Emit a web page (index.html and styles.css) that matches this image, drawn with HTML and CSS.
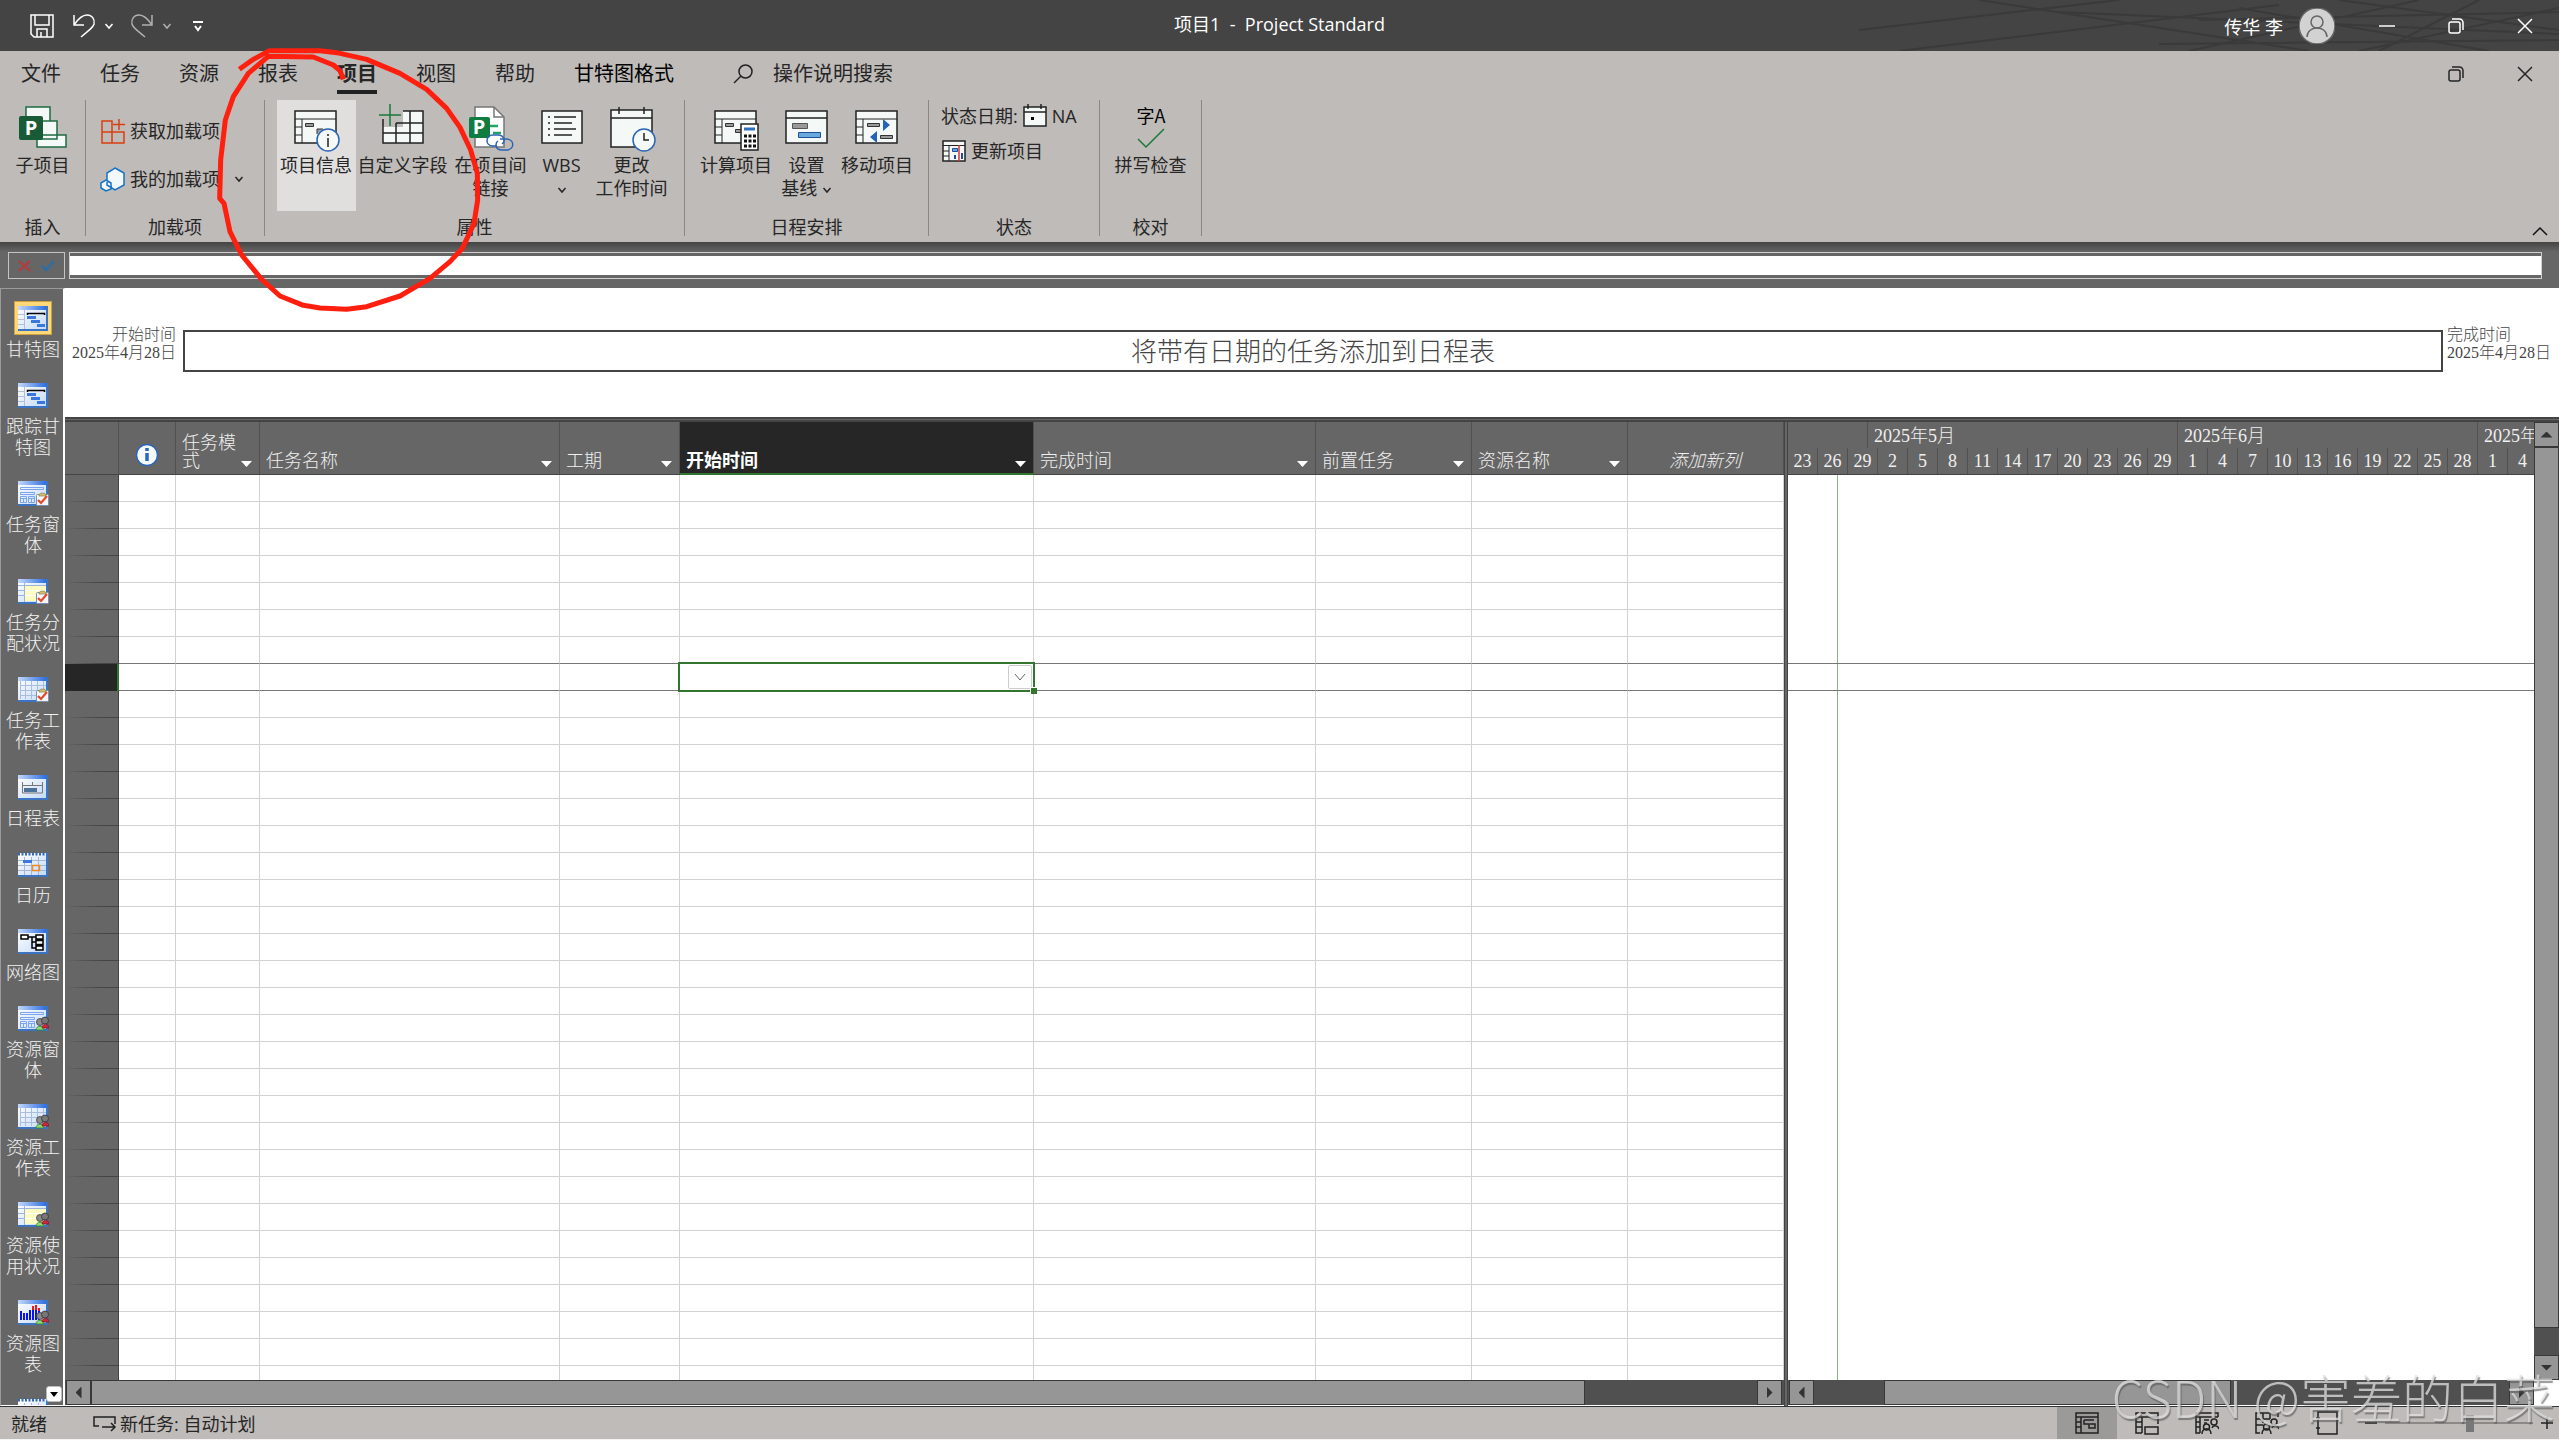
FILE: index.html
```html
<!DOCTYPE html>
<html lang="zh-CN">
<head>
  <meta charset="UTF-8">
  <meta name="viewport" content="width=device-width, initial-scale=1.0">
  <title>项目1 - Project Standard</title>
  <link rel="stylesheet" href="styles.css">
</head>
<body>
  <!-- Shared icon parts -->
  <svg class="defs" aria-hidden="true">
    <defs>
      <linearGradient id="winBar" x1="0" x2="1" y1="0" y2="0">
        <stop offset="0" stop-color="#c3d8fb"/><stop offset="1" stop-color="#2f6fe0"/>
      </linearGradient>
      <linearGradient id="winBody" x1="0" x2="1" y1="0" y2="1">
        <stop offset="0" stop-color="#ffffff"/><stop offset="1" stop-color="#c4daf8"/>
      </linearGradient>
      <symbol id="win" viewBox="0 0 32 26">
        <rect x="1" y="1" width="30" height="25" fill="#3c74c4"/>
        <rect x="1" y="1" width="28" height="23" fill="url(#winBody)"/>
        <rect x="1" y="1" width="28" height="4" fill="url(#winBar)"/>
      </symbol>
      <symbol id="gantt" viewBox="0 0 32 26">
        <use href="#win"/>
        <path d="M7.500 5v19M1 9.500h6M1 14.500h6M1 19.500h6" stroke="#b4bfd4"/>
        <path d="M10.500 10V8.500h17V10" fill="none" stroke="#000" stroke-width="1.500"/>
        <path d="M10 11h9v3h-9zM14 15h9v3h-9zM20 19h8v3h-8z" fill="#3a78e0"/>
      </symbol>
      <symbol id="form" viewBox="0 0 32 26">
        <use href="#win"/>
        <path d="M3.500 7.500h23v2h-23zM3.500 12.500h14v2h-14zM3.500 16.500h6v6h-6zM11.500 16.500h6v6h-6zM3.500 18.500h6M11.500 18.500h6M6.500 18v4M14.500 18v4" fill="none" stroke="#7ba6ee"/>
      </symbol>
      <symbol id="usage" viewBox="0 0 32 26">
        <use href="#win"/>
        <path d="M8 8h21v15H8z" fill="#fdfbc0"/>
        <path d="M8 12.500h21M8 17.500h21" stroke="#fff"/>
        <path d="M1 7.500h28M7.500 5v19M1 12.500h6M1 17.500h6" stroke="#9db5dc"/>
      </symbol>
      <symbol id="sheet" viewBox="0 0 32 26">
        <use href="#win"/>
        <path d="M3.500 5v18M8.500 5v18M14.500 5v18M20.500 5v18M26.500 5v18M3 9.500h26M3 14.500h26M3 19.500h26" stroke="#a9bddf"/>
      </symbol>
      <symbol id="clip" viewBox="0 0 32 26">
        <rect x="19.500" y="14.500" width="12" height="11" rx="1" fill="#f3f6fb" stroke="#7d8fb0"/>
        <path d="M22 16c0-2 1-3 3.500-3s3.500 1 3.500 3z" fill="#d3bd6e" stroke="#8e8150" stroke-width=".7"/>
        <path d="M21 20l3 3 6-7" fill="none" stroke="#e04a2c" stroke-width="2.200"/>
      </symbol>
      <symbol id="people" viewBox="0 0 32 26">
        <circle cx="23" cy="17" r="3.500" fill="#8a8a8a" stroke="#3c3c3c" stroke-width=".8"/><circle cx="28" cy="15.500" r="3.500" fill="#777" stroke="#333" stroke-width=".8"/>
        <path d="M19 25c0-5 8-5 8 0z" fill="#8ddd77" stroke="#2d7d25" stroke-width=".8"/>
        <path d="M25 23c0-5 7-5 7 0z" fill="#c92a3c" stroke="#7d1522" stroke-width=".8"/>
      </symbol>
      <symbol id="cal" viewBox="0 0 32 26">
        <rect x="1" y="2" width="30" height="24" fill="#3c74c4"/>
        <rect x="1" y="2" width="28" height="22" fill="url(#winBody)"/>
        <path d="M1 3h28" stroke="#3767ad" stroke-width="3" stroke-dasharray="2 1.500"/>
        <path d="M1 9.500h28M1 14.500h28M1 19.500h28M7.500 6v18M14.500 6v18M21.500 6v18" stroke="#a9b6d0"/>
        <path d="M6 9h9v3H6z" fill="#3a78e0"/>
        <path d="M15.500 14.500h7v5h-7z" fill="none" stroke="#f08c1e" stroke-width="1.500"/>
      </symbol>
      <symbol id="restore" viewBox="0 0 16 16">
        <rect x="1" y="4" width="11" height="11" rx="2" fill="none" stroke="currentColor" stroke-width="1.500"/>
        <path d="M4 1h7.500a3.500 3.500 0 0 1 3.500 3.500V12" fill="none" stroke="currentColor" stroke-width="1.500"/>
      </symbol>
      <symbol id="cross" viewBox="0 0 16 16">
        <path d="M1 1l14 14M15 1L1 15" stroke="currentColor" stroke-width="1.500"/>
      </symbol>
      <symbol id="chev" viewBox="0 0 10 8">
        <path d="M1.500 2L5 6l3.500-4" fill="none" stroke="currentColor" stroke-width="1.500"/>
      </symbol>
    </defs>
  </svg>

  <header class="titlebar">
    <svg class="scribble" viewBox="0 0 700 51" preserveAspectRatio="none" aria-hidden="true">
      <path d="M0 30L260 0M40 51L420 5M120 0l330 51M200 12l500 22M330 51L560 0M480 0l220 30M380 8l250 43M500 51L700 8M300 44l400-4M340 20l360-8M520 51l100-51"/>
    </svg>
    <div class="quick">
      <button aria-label="保存"><svg width="24" height="24" viewBox="0 0 24 24"><path d="M1 1h22v22H4l-3-3zM5 1v10h14V1M7 23v-8h10v8M11 18v5"/></svg></button>
      <button class="undo" aria-label="撤消"><svg width="24" height="24" viewBox="0 0 24 24"><path d="M2 1v10h10M2 11C6 5 10 1 15 1c5 0 8 4 7 9-1 4-5 6-13 13"/></svg></button>
      <button aria-label="撤消列表"><svg width="10" height="8"><use href="#chev"/></svg></button>
      <button class="undo dim" aria-label="恢复"><svg width="24" height="24" viewBox="0 0 24 24"><path d="M22 1v10H12M22 11C18 5 14 1 9 1 4 1 1 5 2 10c1 4 5 6 13 13"/></svg></button>
      <button class="dim" aria-label="恢复列表"><svg width="10" height="8"><use href="#chev"/></svg></button>
      <button class="more" aria-label="自定义快速访问工具栏"><svg width="12" height="12" viewBox="0 0 12 12"><path d="M1 2h10M3 6l3 4 3-4" stroke-width="2"/></svg></button>
    </div>
    <h1 class="title">项目1&nbsp; -&nbsp; Project Standard</h1>
    <div class="account">
      <span>传华 李</span>
      <svg class="avatar" width="36" height="36" viewBox="0 0 36 36"><circle cx="18" cy="18" r="18" fill="#d2d2d2"/><circle cx="18" cy="14" r="6"/><path d="M8 29c0-12 20-12 20 0"/></svg>
      <button class="win-btn" aria-label="最小化"><svg width="16" height="16" viewBox="0 0 16 16"><path d="M0 8h16" stroke-width="1.500"/></svg></button>
      <button class="win-btn" aria-label="还原"><svg width="16" height="16"><use href="#restore"/></svg></button>
      <button class="win-btn" aria-label="关闭"><svg width="16" height="16"><use href="#cross"/></svg></button>
    </div>
  </header>

  <nav class="tabs">
    <a href="#">文件</a>
    <a href="#">任务</a>
    <a href="#">资源</a>
    <a href="#">报表</a>
    <a href="#" class="active">项目</a>
    <a href="#">视图</a>
    <a href="#">帮助</a>
    <a href="#" class="context">甘特图格式</a>
    <a href="#" class="tell-me">
      <svg width="20" height="20" viewBox="0 0 20 20"><circle cx="12.500" cy="7.500" r="6.500"/><path d="M8 12l-7 7"/></svg>操作说明搜索</a>
    <div class="doc-btns">
      <button class="win-btn" aria-label="还原文档"><svg width="16" height="16"><use href="#restore"/></svg></button>
      <button class="win-btn" aria-label="关闭文档"><svg width="16" height="16"><use href="#cross"/></svg></button>
    </div>
  </nav>

  <section class="ribbon">
    <div class="group g-insert">
      <div class="tools">
        <button class="tool">
          <svg width="48" height="48" viewBox="0 0 48 48">
            <path d="M7 4h24v14H7zM18 18h20v18H18zM18 32h29v12H18z" fill="#f4f9f8" stroke="#1d6b42" stroke-width="1.500"/>
            <rect x="0" y="13" width="24" height="24" rx="2" fill="#185c37"/>
            <text class="p-logo" x="12" y="32">P</text>
          </svg>
          子项目
        </button>
      </div>
      <h2>插入</h2>
    </div>

    <div class="group g-addins">
      <div class="tools stack">
        <button class="row-tool">
          <svg width="26" height="26" viewBox="0 0 26 26"><path d="M2 3h10v22H2zM2 14h22v11H2M12 14v11M19 1v11M13 6.500h12" fill="none" stroke="#d8400f" stroke-width="1.500"/></svg>
          获取加载项
        </button>
        <button class="row-tool">
          <svg width="26" height="26" viewBox="0 0 26 26"><path d="M15 2l9 5v12l-9 5-8-5V7zM6 14l5 3v6l-5 2-5-3v-5z" fill="#f3f8fc" stroke="#1473c4" stroke-width="1.500"/></svg>
          我的加载项
          <svg class="row-chev" width="10" height="8"><use href="#chev"/></svg>
        </button>
      </div>
      <h2>加载项</h2>
    </div>

    <div class="group g-props">
      <div class="tools">
        <button class="tool selected">
          <svg width="48" height="48" viewBox="0 0 48 48">
            <path d="M3 8h41v32H3z" fill="#f4f9f8" stroke="#222" stroke-width="1.500"/>
            <path d="M3 16h41M10 16v24M3 24h7M3 32h7" stroke="#222" fill="none"/>
            <path d="M13.500 20.500h8v3h-8zM25 31v-5h6" fill="#9a9a9a" stroke="#333"/>
            <circle cx="36" cy="37" r="11" fill="#f4f9f8" stroke="#2b64b5" stroke-width="1.500"/>
            <path d="M36 31v2M36 35v9" stroke="#222" stroke-width="1.500"/>
          </svg>
          项目信息
        </button>
        <button class="tool t-fields">
          <svg width="48" height="48" viewBox="0 0 48 48">
            <path d="M24 8h20v32H4V24h20z" fill="#f4f9f8"/>
            <path d="M24 8h20v32H4V16M17 20h27M4 30h40M17 20v20M31 8v32" fill="none" stroke="#222" stroke-width="1.500"/>
            <path d="M11 1v22M0 12h22" stroke="#18793c" stroke-width="1.500"/>
          </svg>
          自定义字段
        </button>
        <button class="tool t-links">
          <svg width="48" height="48" viewBox="0 0 48 48">
            <path d="M8 4h19l10 10v30H8z" fill="#fff" stroke="#777" stroke-width="1.500"/>
            <path d="M27 4v10h10" fill="none" stroke="#777" stroke-width="1.500"/>
            <path d="M23 23h8M26 30h8" stroke="#21a566" stroke-width="2.500"/>
            <rect x="2" y="14" width="21" height="21" rx="2" fill="#107c41"/>
            <text class="p-logo" x="12" y="31">P</text>
            <path d="M30 43h-4c-8 0-8-11 0-11h5c6 0 8 6 4 9M33 36h6c9 0 9 11 0 11h-4c-7 0-7-7-4-9" fill="none" stroke="#2b64b5" stroke-width="1.500"/>
          </svg>
          在项目间<br>链接
        </button>
        <button class="tool t-wbs">
          <svg width="48" height="48" viewBox="0 0 48 48">
            <path d="M4 8h40v32H4z" fill="#f4f9f8" stroke="#222" stroke-width="1.500"/>
            <path d="M16 14h22M16 20h18M16 26h22M16 32h18M10 14h2M10 20h2M10 26h2M10 32h2" stroke="#222" stroke-width="1.500"/>
          </svg>
          WBS<br><svg width="10" height="8"><use href="#chev"/></svg>
        </button>
        <button class="tool t-time">
          <svg width="48" height="48" viewBox="0 0 48 48">
            <path d="M3 7h41v37H3zM3 15h41M11 4v7M36 4v7" fill="#f4f9f8" stroke="#222" stroke-width="1.500"/>
            <circle cx="36" cy="37" r="11" fill="#f4f9f8" stroke="#2b64b5" stroke-width="1.500"/>
            <path d="M36 30v7h5" fill="none" stroke="#222" stroke-width="1.500"/>
          </svg>
          更改<br>工作时间
        </button>
      </div>
      <h2>属性</h2>
    </div>

    <div class="group g-schedule">
      <div class="tools">
        <button class="tool t-plan">
          <svg width="48" height="48" viewBox="0 0 48 48">
            <path d="M3 8h41v32H3z" fill="#f4f9f8" stroke="#222" stroke-width="1.500"/>
            <path d="M3 16h41M10 16v24M3 24h7M3 32h7" stroke="#222" fill="none"/>
            <path d="M13.500 20.500h8v3h-8zM23.500 26.500h6v3h-6z" fill="#9a9a9a" stroke="#333"/>
            <rect x="29" y="21" width="17" height="26" fill="#fff" stroke="#222" stroke-width="1.500"/>
            <path d="M32 24.500h11v3H32z" fill="#2f6fc0"/>
            <path d="M32 33h12M32 38h12M32 43h12" stroke="#111" stroke-width="3" stroke-dasharray="3 1.500"/>
          </svg>
          计算项目
        </button>
        <button class="tool t-base">
          <svg width="48" height="48" viewBox="0 0 48 48">
            <path d="M3 8h41v32H3zM3 15h41" fill="#f4f9f8" stroke="#222" stroke-width="1.500"/>
            <path d="M9.500 20.500h15v5h-15z" fill="#999" stroke="#555"/>
            <path d="M15.500 29.500h22v5h-22z" fill="#69a9dc" stroke="#1f4f9b"/>
          </svg>
          设置<br>基线 <svg width="10" height="8"><use href="#chev"/></svg>
        </button>
        <button class="tool t-plan">
          <svg width="48" height="48" viewBox="0 0 48 48">
            <path d="M3 8h41v32H3z" fill="#f4f9f8" stroke="#222" stroke-width="1.500"/>
            <path d="M3 16h41M10 16v24M3 24h7M3 32h7" stroke="#222" fill="none"/>
            <path d="M14.500 20.500h12v3h-12zM27.500 32.500h12v3h-12z" fill="#9a9a9a" stroke="#333"/>
            <path d="M30 16l7 6-7 6zM24 28l-7 6 7 6z" fill="#2563b8"/>
          </svg>
          移动项目
        </button>
      </div>
      <h2>日程安排</h2>
    </div>

    <div class="group g-status">
      <div class="tools stack">
        <button class="row-tool">
          状态日期:
          <svg width="26" height="26" viewBox="0 0 26 26"><path d="M2 4h22v19H2zM2 9h22M6 1v5M19 1v5" fill="#f4f9f8" stroke="#222" stroke-width="1.500"/><path d="M9 14h3v3H9z"/></svg>
          NA
        </button>
        <button class="row-tool">
          <svg width="26" height="26" viewBox="0 0 26 26"><path d="M2 3h22v20H2z" fill="#f4f9f8" stroke="#222" stroke-width="1.500"/><path d="M2 7.500h22M8 7v16M2 13h6M2 18h6" stroke="#222" fill="none"/><path d="M11.500 10.500h5v3h-5z" fill="#69a9dc" stroke="#1f4f9b"/><path d="M18 7v16" stroke="#d33" stroke-width="1.500"/><path d="M14 17v4M21 15v6" stroke="#1f4f9b" stroke-width="2"/></svg>
          更新项目
        </button>
      </div>
      <h2>状态</h2>
    </div>

    <div class="group g-proof">
      <div class="tools">
        <button class="tool">
          <svg width="48" height="48" viewBox="0 0 48 48">
            <text class="spell" x="24" y="20">字A</text>
            <path d="M11 36l8 8 18-18" fill="none" stroke="#18793c" stroke-width="1.500"/>
          </svg>
          拼写检查
        </button>
      </div>
      <h2>校对</h2>
    </div>
    <button class="collapse" aria-label="折叠功能区"><svg width="16" height="10" viewBox="0 0 16 10"><path d="M1 9l7-7 7 7" fill="none" stroke="#111" stroke-width="1.500"/></svg></button>
  </section>

  <div class="entry-bar">
    <div class="entry-btns">
      <button aria-label="取消"><svg width="14" height="12" viewBox="0 0 14 12"><path d="M1 1l11 10M12 1L1 11" stroke="#b83a3a" stroke-width="2"/></svg></button>
      <button aria-label="输入"><svg width="14" height="12" viewBox="0 0 14 12"><path d="M1 6l4 4 8-9" fill="none" stroke="#2b6ea8" stroke-width="2.500"/></svg></button>
    </div>
    <div class="entry"><input type="text" aria-label="数据编辑栏"></div>
  </div>

  <main class="workspace">
    <nav class="viewbar">
      <a href="#" class="current"><svg width="32" height="26"><use href="#gantt"/></svg><span>甘特图</span></a>
      <a href="#"><svg width="32" height="26"><use href="#gantt"/></svg><span>跟踪甘特图</span></a>
      <a href="#"><svg width="32" height="26"><use href="#form"/><use href="#clip"/></svg><span>任务窗体</span></a>
      <a href="#"><svg width="32" height="26"><use href="#usage"/><use href="#clip"/></svg><span>任务分配状况</span></a>
      <a href="#"><svg width="32" height="26"><use href="#sheet"/><use href="#clip"/></svg><span>任务工作表</span></a>
      <a href="#"><svg width="32" height="26"><use href="#win"/><path d="M5.500 8v11h20V8M15.500 8v4M5 11.500h21" fill="none" stroke="#777"/><path d="M7 14h13v4H7z" fill="#4d7299"/></svg><span>日程表</span></a>
      <a href="#"><svg width="32" height="26"><use href="#cal"/></svg><span>日历</span></a>
      <a href="#"><svg width="32" height="26"><use href="#win"/><path d="M11 9h8M15 9v11h4M15 14h4" fill="none" stroke="#000" stroke-width="1.500"/><path d="M4 7h7v4H4zM19 7h7v4h-7zM19 12.500h7v4h-7zM19 18h7v4h-7z" fill="#fff" stroke="#000" stroke-width="1.500"/></svg><span>网络图</span></a>
      <a href="#"><svg width="32" height="26"><use href="#form"/><use href="#people"/></svg><span>资源窗体</span></a>
      <a href="#"><svg width="32" height="26"><use href="#sheet"/><use href="#people"/></svg><span>资源工作表</span></a>
      <a href="#"><svg width="32" height="26"><use href="#usage"/><use href="#people"/></svg><span>资源使用状况</span></a>
      <a href="#"><svg width="32" height="26"><use href="#win"/><path d="M4 12v9M7 14v7M10 14v7M13 11v10M16 10v11M19 10v11M22 11v10" stroke="#0a14e6" stroke-width="2"/><path d="M16 7v4M19 6v5M22 9v3" stroke="#f01414" stroke-width="2"/><use href="#people"/></svg><span>资源图表</span></a>
      <a href="#"><svg width="32" height="26"><use href="#cal"/></svg></a>
      <button class="view-more" aria-label="更多视图"><svg width="8" height="5" viewBox="0 0 8 5"><path d="M0 0h8L4 5z"/></svg></button>
    </nav>

    <div class="content">
      <section class="timeline">
        <div class="tl-date start">开始时间<br>2025年4月28日</div>
        <div class="tl-bar">将带有日期的任务添加到日程表</div>
        <div class="tl-date">完成时间<br>2025年4月28日</div>
      </section>

      <div class="panes">
        <section class="sheet-pane">
          <div class="sheet-clip">
            <table class="sheet">
              <colgroup>
                <col class="c-id"><col class="c-info"><col class="c-mode"><col class="c-name"><col class="c-dur">
                <col class="c-start"><col class="c-finish"><col class="c-pred"><col class="c-res"><col>
              </colgroup>
              <thead>
                <tr>
                  <th></th>
                  <th class="info"><svg width="24" height="24" viewBox="0 0 24 24"><circle cx="12" cy="12" r="10.500" fill="#f5f9fc" stroke="#2b67b8" stroke-width="1.500"/><path d="M12 5v3M12 10v8" stroke="#2b67b8" stroke-width="3.500"/></svg></th>
                  <th><div class="th-in"><span>任务模式</span><button aria-label="筛选任务模式"></button></div></th>
                  <th><div class="th-in"><span>任务名称</span><button aria-label="筛选任务名称"></button></div></th>
                  <th><div class="th-in"><span>工期</span><button aria-label="筛选工期"></button></div></th>
                  <th class="picked"><div class="th-in"><span>开始时间</span><button aria-label="筛选开始时间"></button></div></th>
                  <th><div class="th-in"><span>完成时间</span><button aria-label="筛选完成时间"></button></div></th>
                  <th><div class="th-in"><span>前置任务</span><button aria-label="筛选前置任务"></button></div></th>
                  <th><div class="th-in"><span>资源名称</span><button aria-label="筛选资源名称"></button></div></th>
                  <th class="add">添加新列</th>
                </tr>
              </thead>
              <tbody id="rows"></tbody>
            </table>
          </div>
          <div class="hscroll">
            <button class="sb-btn left" aria-label="向左滚动"></button>
            <div class="sb-track"><div class="sb-thumb sheet-thumb"></div></div>
            <button class="sb-btn right" aria-label="向右滚动"></button>
          </div>
        </section>

        <div class="splitter"></div>

        <section class="gantt-pane">
          <div class="gantt-main">
            <div class="timescale">
              <div class="months"><span class="m-apr"></span><span class="m-may">2025年5月</span><span class="m-jun">2025年6月</span><span>2025年7月</span></div>
              <div class="days">
                <span>23</span><span>26</span><span>29</span><span>2</span><span>5</span><span>8</span><span>11</span><span>14</span><span>17</span><span>20</span><span>23</span><span>26</span><span>29</span><span>1</span><span>4</span><span>7</span><span>10</span><span>13</span><span>16</span><span>19</span><span>22</span><span>25</span><span>28</span><span>1</span><span>4</span>
              </div>
            </div>
            <div class="chart">
              <div class="today"></div>
              <div class="band"></div>
            </div>
            <div class="hscroll">
              <button class="sb-btn left" aria-label="向左滚动"></button>
              <div class="sb-track"><div class="sb-thumb gantt-thumb"></div></div>
              <button class="sb-btn right" aria-label="向右滚动"></button>
            </div>
          </div>
          <div class="vscroll">
            <button class="sb-btn up" aria-label="向上滚动"></button>
            <div class="sb-track"><div class="sb-thumb"></div></div>
            <button class="sb-btn down" aria-label="向下滚动"></button>
          </div>
        </section>
      </div>
    </div>
  </main>

  <footer class="statusbar">
    <span class="ready">就绪</span>
    <button class="new-task"><svg width="24" height="18" viewBox="0 0 24 18"><path d="M6 12H1V3h21v7M9 13h13M18 9l4 4-4 4" fill="none" stroke="#222" stroke-width="1.500"/></svg>新任务: 自动计划</button>
    <div class="views">
      <button class="on" aria-label="甘特图"><svg width="24" height="24" viewBox="0 0 24 24"><path d="M1 2h22v20H1zM1 6h22M6 6v16M1 11h5M1 16h5M9 9h10M9 9v4h5v4h6v-4h-5"/></svg></button>
      <button aria-label="任务分配状况"><svg width="24" height="24" viewBox="0 0 24 24"><path d="M23 13V2H1v20h6M1 6h22M7 6v16M1 11h6M1 16h6M10 16h13v7H10z"/></svg></button>
      <button aria-label="工作组规划器"><svg width="24" height="24" viewBox="0 0 24 24"><path d="M23 6V2H1v20h4M1 6h22M5 6v16M1 11h4M1 16h4M9 9h5M9 12h3M7 23c0-7 9-7 9 0M17 17c1-3 6-3 7 1"/><circle cx="11.500" cy="16" r="3"/><circle cx="19" cy="11" r="3"/></svg></button>
      <button aria-label="资源工作表"><svg width="24" height="24" viewBox="0 0 24 24"><path d="M23 6V2H1v20h4M1 8h14M8 2v10M15 2v6M1 14h7M7 23c0-7 9-7 9 0M17 17c1-3 6-3 7 1"/><circle cx="11.500" cy="16" r="3"/><circle cx="19" cy="11" r="3"/></svg></button>
      <button aria-label="报表"><svg width="24" height="24" viewBox="0 0 24 24"><path d="M3 1h19v22H3zM1 7h4M1 17h4"/></svg></button>
    </div>
    <div class="zoom">
      <button aria-label="缩小"><svg width="12" height="12" viewBox="0 0 12 12"><path d="M0 6h12" stroke="#222" stroke-width="1.500"/></svg></button>
      <input type="range" min="0" max="100" value="58" aria-label="缩放">
      <button aria-label="放大"><svg width="12" height="12" viewBox="0 0 12 12"><path d="M0 6h12M6 0v12" stroke="#222" stroke-width="1.500"/></svg></button>
    </div>
  </footer>

  <!-- Hand-drawn marker round the project info button -->
  <svg class="marker" viewBox="0 0 900 870" aria-hidden="true">
    <path d="M118 88L160 58L208 32L360 32L410 38L500 58L600 100L680 148L740 205L780 262L812 330L832 400L833 480L822 550L787 625L750 665L690 715L600 768L500 800L440 808L360 804L310 796L240 768L185 718L125 645L90 575L72 490L59 475L62 360L76 240L100 170L145 100L205 49L340 51L400 75L420 92L430 118"/>
  </svg>
  <div class="watermark">CSDN @害羞的白菜</div>

  <script src="script.js"></script>
</body>
</html>
```

FILE: styles.css
```css
:root {
  --dark: #444444;
  --gray: #666666;
  --ribbon: #bfbbb8;
  --line: #d2d2d2;
  --green: #31752f;
  --ui: "Open Sans", "Noto Sans CJK SC", sans-serif;
  --song: "Liberation Serif", "Noto Sans CJK SC", serif;
}

* {
  margin: 0;
  padding: 0;
  box-sizing: border-box;
}

body {
  display: flex;
  flex-direction: column;
  height: 100vh;
  overflow: hidden;
  font-family: var(--ui);
  font-size: 18px;
  color: #262626;
  background: var(--gray);
}

button {
  border: none;
  background: none;
  font: inherit;
  color: inherit;
}

a {
  color: inherit;
  text-decoration: none;
}

svg {
  display: block;
  flex: none;
}

.defs {
  position: absolute;
  width: 0;
  height: 0;
}

/* Title bar */
.titlebar {
  position: relative;
  display: grid;
  grid-template-columns: 1fr auto 1fr;
  align-items: center;
  height: 51px;
  flex: none;
  background: var(--dark);
  color: #fff;
}

.titlebar svg {
  fill: none;
  stroke: currentColor;
  stroke-width: 1.5;
}

.titlebar .scribble {
  position: absolute;
  right: 0;
  top: 0;
  width: 700px;
  height: 51px;
  stroke: #3a3a3a;
  stroke-width: 2;
}

.quick {
  display: flex;
  align-items: center;
  padding-left: 30px;
  gap: 8px;
}

.quick .undo {
  margin-left: 10px;
}

.quick .dim {
  color: #b0b0b0;
}

.quick .undo.dim {
  margin-left: 8px;
}

.quick .more {
  margin-left: 12px;
}

.title {
  font-size: 18px;
  font-weight: 400;
  padding-bottom: 5px;
}

.account {
  position: relative;
  display: flex;
  align-items: center;
  justify-content: flex-end;
  height: 48px;
}

.titlebar .avatar {
  margin: 0 17px 0 16px;
  stroke: #666;
}

.win-btn {
  display: flex;
  align-items: center;
  justify-content: center;
  width: 69px;
  height: 40px;
}

/* Ribbon */
.tabs {
  display: flex;
  align-items: center;
  gap: 39px;
  height: 45px;
  flex: none;
  padding-left: 21px;
  background: var(--ribbon);
  font-size: 20px;
}

.tabs a {
  height: 41px;
  line-height: 41px;
}

.tabs .active {
  font-weight: 700;
  border-bottom: 4px solid #222;
}

.tabs .context {
  color: #000;
}

.tabs .tell-me {
  display: flex;
  align-items: center;
  gap: 20px;
  margin-left: 20px;
}

.tell-me svg {
  fill: none;
  stroke: #222;
  stroke-width: 1.5;
}

.doc-btns {
  display: flex;
  margin-left: auto;
}

.ribbon {
  display: flex;
  flex: none;
  height: 146px;
  padding: 4px 0 6px;
  background: var(--ribbon);
}

.group {
  display: flex;
  flex-direction: column;
  justify-content: space-between;
  border-right: 1px solid #8a8785;
  height: 136px;
}

.group h2 {
  font-size: 18px;
  font-weight: 400;
  line-height: 18px;
  text-align: center;
}

.tools {
  display: flex;
  align-items: flex-start;
  justify-content: center;
}

.tool {
  padding-top: 3px;
  line-height: 23px;
  text-align: center;
  white-space: nowrap;
}

.tool svg {
  display: inline-block;
  vertical-align: middle;
  overflow: visible;
}

.tool > svg:first-child {
  display: block;
  margin: 0 auto 3px;
}

.tool.selected {
  width: 79px;
  margin-right: 1px;
  padding-bottom: 34px;
  background: #e0dfde;
}

.t-fields { width: 92px; }
.t-links { width: 84px; }
.t-wbs { width: 58px; }
.t-time { width: 82px; }
.t-plan { width: 77px; }
.t-base { width: 64px; }

.g-insert { width: 86px; }
.g-addins { width: 179px; }
.g-props { width: 420px; }
.g-schedule { width: 244px; }
.g-status { width: 171px; }
.g-proof { width: 102px; }

.stack {
  flex-direction: column;
}

.row-tool {
  display: flex;
  align-items: center;
  gap: 4px;
  line-height: 26px;
  white-space: nowrap;
}

.g-addins .stack {
  gap: 22px;
  padding: 18px 0 0 14px;
}

.row-chev {
  margin-left: 10px;
}

.g-status .stack {
  gap: 9px;
  padding: 3px 0 0 12px;
}

.p-logo {
  font: 700 20px "Open Sans", sans-serif;
  fill: #fff;
  text-anchor: middle;
}

.spell {
  font: 18px "Noto Sans CJK SC", sans-serif;
  text-anchor: middle;
}

.collapse {
  align-self: flex-end;
  margin: 0 11px 0 auto;
}

/* Entry bar */
.entry-bar {
  display: flex;
  gap: 4px;
  height: 46px;
  flex: none;
  padding: 10px 17px 9px 8px;
  background: linear-gradient(#444, #666 10px);
}

.entry-btns {
  display: flex;
  align-items: center;
  justify-content: space-around;
  width: 57px;
  padding: 0 5px;
  border: 1px solid #c4c4c4;
}

.entry {
  flex: 1;
  display: flex;
  padding: 3px 0;
  border: 1px solid #d0d0d0;
}

.entry input {
  width: 100%;
  border: none;
  background: #fff;
}

/* View bar */
.workspace {
  display: flex;
  flex: 1;
  min-height: 0;
}

.viewbar {
  position: relative;
  width: 65px;
  flex: none;
  padding-top: 12px;
  overflow: hidden;
  border: 1px solid #9a9a9a;
  border-right: 2px solid #fff;
  border-bottom: 1px solid #fff;
  background: var(--gray);
  color: #f2f2f2;
  font-family: var(--song);
  font-weight: 300;
  line-height: 21px;
  text-align: center;
}

.viewbar a {
  display: flex;
  flex-direction: column;
  align-items: center;
  padding: 0 0 17px 2px;
}

.viewbar a svg {
  box-sizing: content-box;
  padding: 4px 3px;
}

.viewbar a.current svg {
  background: #fdd778;
  box-shadow: inset 0 0 0 1px #c9a244;
}

.viewbar span {
  width: 58px;
  margin-top: 5px;
}

.view-more {
  position: absolute;
  right: 1px;
  bottom: 3px;
  display: flex;
  align-items: center;
  justify-content: center;
  width: 16px;
  height: 16px;
  border: 1px solid #bbb;
  border-radius: 3px;
  background: #fff;
}

/* Timeline */
.content {
  display: flex;
  flex-direction: column;
  flex: 1;
  min-width: 0;
}

.timeline {
  display: flex;
  align-items: flex-start;
  gap: 4px;
  height: 129px;
  flex: none;
  padding: 38px 8px 0 7px;
  background: #fff;
  color: #444;
}

.tl-date {
  font: 300 16px/18px var(--song);
  white-space: nowrap;
}

.tl-date.start {
  margin-right: 3px;
  text-align: right;
}

.tl-bar {
  flex: 1;
  height: 42px;
  margin-top: 4px;
  border: 2px solid #444;
  font-size: 26px;
  font-weight: 300;
  line-height: 38px;
  text-align: center;
}

/* Task sheet */
.panes {
  display: flex;
  flex: 1;
  min-height: 0;
  border-top: 5px double var(--dark);
}

.sheet-pane {
  display: flex;
  flex-direction: column;
  flex: 1719 1 0;
  min-width: 0;
  background: #fff;
}

.sheet-clip {
  flex: 1;
  min-height: 0;
  overflow: hidden;
}

.sheet {
  width: 100%;
  table-layout: fixed;
  border-spacing: 0;
  font-family: var(--song);
}

.c-id { width: 54px; }
.c-info { width: 57px; }
.c-mode { width: 84px; }
.c-name { width: 300px; }
.c-dur { width: 120px; }
.c-start { width: 354px; }
.c-finish { width: 282px; }
.c-pred, .c-res { width: 156px; }

.sheet th {
  height: 53px;
  padding: 0 7px 4px 6px;
  border-right: 1px solid #505050;
  border-bottom: 1px solid var(--dark);
  background: var(--gray);
  color: #f0f0f0;
  font-weight: 300;
  line-height: 18px;
  text-align: left;
  vertical-align: bottom;
}

.sheet .info {
  padding: 14px 0 0;
  vertical-align: middle;
}

.info svg {
  margin: 0 auto;
}

.sheet .picked {
  background: #262626;
  border-bottom: 2px solid var(--green);
  padding-bottom: 3px;
  color: #fff;
  font-weight: 700;
}

.sheet .add {
  font-style: italic;
  text-align: center;
}

.th-in {
  display: flex;
  align-items: flex-end;
  justify-content: space-between;
  gap: 4px;
}

.th-in button {
  flex: none;
  width: 11px;
  height: 6px;
  margin-bottom: 3px;
  background: #fff;
  clip-path: polygon(0 0, 100% 0, 50% 100%);
}

.sheet td {
  height: 27px;
  border-right: 1px solid var(--line);
  border-bottom: 1px solid var(--line);
}

.sheet td:first-child {
  border-right-color: var(--dark);
  border-bottom: none;
  background: linear-gradient(90deg, var(--gray), #444 70%) bottom / 100% 1px no-repeat var(--gray);
}

.sheet .before td,
.sheet .current td {
  border-bottom-color: #777;
}

.sheet .current td:first-child {
  border-right: 2px solid var(--green);
  background: #262626;
}

.sheet .cell {
  position: relative;
}

.cell-box {
  position: absolute;
  inset: -2px;
  display: flex;
  justify-content: flex-end;
  padding: 1px;
  border: 2px solid var(--green);
}

.cell-box::after {
  content: "";
  position: absolute;
  right: -4px;
  bottom: -4px;
  width: 6px;
  height: 6px;
  border: 1px solid #fff;
  border-width: 1px 0 0 1px;
  background: var(--green);
}

.cell-box button {
  display: flex;
  align-items: center;
  justify-content: center;
  width: 24px;
  border: 1px solid #ccc;
  border-radius: 2px;
  background: #fdfdfd;
}

.splitter {
  width: 4px;
  background: var(--gray);
  border: 1px solid var(--dark);
  border-width: 0 1px;
}

/* Gantt chart */
.gantt-pane {
  display: flex;
  flex: 771 1 0;
  min-width: 0;
  background: #fff;
}

.gantt-main {
  display: flex;
  flex-direction: column;
  flex: 1;
  min-width: 0;
}

.timescale {
  height: 53px;
  flex: none;
  overflow: hidden;
  border-bottom: 1px solid var(--dark);
  background: var(--gray);
  color: #f0f0f0;
  font-family: var(--song);
  font-weight: 300;
  line-height: 26px;
  white-space: nowrap;
}

.months,
.days {
  display: flex;
}

.months span {
  flex: none;
  height: 26px;
  padding-left: 6px;
  line-height: 28px;
  border-right: 1px solid #505050;
}

.m-apr { width: 80px; }
.m-may { width: 310px; }
.m-jun { width: 300px; }

.days span {
  flex: none;
  width: 30px;
  height: 26px;
  line-height: 27px;
  border-right: 1px solid #505050;
  text-align: center;
}

.chart {
  position: relative;
  flex: 1;
}

.today {
  position: absolute;
  left: 49px;
  top: 0;
  bottom: 0;
  width: 1px;
  background: #84b883;
}

.band {
  position: absolute;
  left: 0;
  right: 0;
  top: 188px;
  height: 28px;
  border: 1px solid #777;
  border-width: 1px 0;
}

/* Scroll bars */
.hscroll {
  display: flex;
  height: 26px;
  flex: none;
  border-bottom: 1px solid #fff;
  background: #505050;
}

.sheet-pane .hscroll {
  padding: 0 2px 0 1px;
}

.gantt-main .hscroll {
  padding-left: 1px;
}

.vscroll {
  display: flex;
  flex-direction: column;
  width: 25px;
  flex: none;
  margin-bottom: 26px;
  background: #505050;
}

.sb-btn {
  width: 25px;
  height: 25px;
  flex: none;
  border: 1px solid #383838;
  background: #969696;
  display: flex;
  align-items: center;
  justify-content: center;
}

.sb-btn::before {
  content: "";
  width: 6px;
  height: 12px;
  background: #333;
  clip-path: polygon(0 50%, 100% 0, 100% 100%);
}

.sb-btn.right::before {
  clip-path: polygon(0 0, 100% 50%, 0 100%);
}

.sb-btn.up::before,
.sb-btn.down::before {
  width: 12px;
  height: 6px;
  clip-path: polygon(50% 0, 100% 100%, 0 100%);
}

.sb-btn.down::before {
  clip-path: polygon(0 0, 100% 0, 50% 100%);
}

.sb-track {
  flex: 1;
}

.sb-thumb {
  height: 97%;
  border: 1px solid #383838;
  background: #969696;
}

.hscroll .sb-thumb {
  height: 25px;
}

.sheet-thumb {
  width: 89.7%;
}

.gantt-thumb {
  width: 50%;
  margin-left: 10%;
}

/* Status bar */
.statusbar {
  display: flex;
  align-items: center;
  height: 34px;
  flex: none;
  padding-left: 11px;
  border-top: 1px solid #333;
  border-bottom: 1px solid #f4f4f4;
  background: var(--ribbon);
}

.ready {
  width: 82px;
}

.new-task {
  display: flex;
  align-items: center;
  gap: 3px;
}

.views {
  display: flex;
  height: 100%;
  margin-left: auto;
}

.views button {
  display: flex;
  align-items: center;
  justify-content: center;
  width: 60px;
}

.views .on {
  background: #9c9a98;
}

.views svg {
  fill: none;
  stroke: #222;
  stroke-width: 1.5;
}

.zoom {
  display: flex;
  align-items: center;
  gap: 8px;
  padding: 0 6px 0 8px;
}

.zoom input {
  width: 148px;
  height: 17px;
  appearance: none;
  background: linear-gradient(#8b8886, #8b8886) center / 100% 2px no-repeat;
}

.zoom input::-webkit-slider-thumb {
  appearance: none;
  width: 8px;
  height: 17px;
  background: #777;
}

/* Overlays */
.marker {
  position: absolute;
  left: 200px;
  top: 40px;
  width: 300px;
  height: 290px;
  fill: none;
  stroke: #ff1f0f;
  stroke-width: 15;
  stroke-linejoin: round;
  pointer-events: none;
}

.watermark {
  position: absolute;
  right: 4px;
  bottom: 18px;
  font: 300 51px/52px "Noto Sans CJK SC", sans-serif;
  color: rgba(225, 225, 225, 0.75);
  text-shadow: 1px 2px 1px rgba(80, 80, 80, 0.6);
  white-space: nowrap;
  pointer-events: none;
}
```

FILE: script.js
```js
const ROW_COUNT = 34;
const COLUMN_COUNT = 10;
const CURRENT_ROW = 7;
const CURRENT_COLUMN = 5;

const tbody = document.getElementById('rows');

for (let r = 0; r < ROW_COUNT; r++) {
  const tr = document.createElement('tr');
  if (r === CURRENT_ROW - 1) tr.className = 'before';
  if (r === CURRENT_ROW) tr.className = 'current';

  for (let c = 0; c < COLUMN_COUNT; c++) {
    const td = document.createElement('td');
    if (r === CURRENT_ROW && c === CURRENT_COLUMN) {
      td.className = 'cell';
      td.innerHTML = '<div class="cell-box"><button aria-label="选择日期">' +
        '<svg width="12" height="10" viewBox="0 0 12 10"><path d="M1 2l5 6 5-6" fill="none" stroke="#666"/></svg>' +
        '</button></div>';
    }
    tr.appendChild(td);
  }
  tbody.appendChild(tr);
}
```
